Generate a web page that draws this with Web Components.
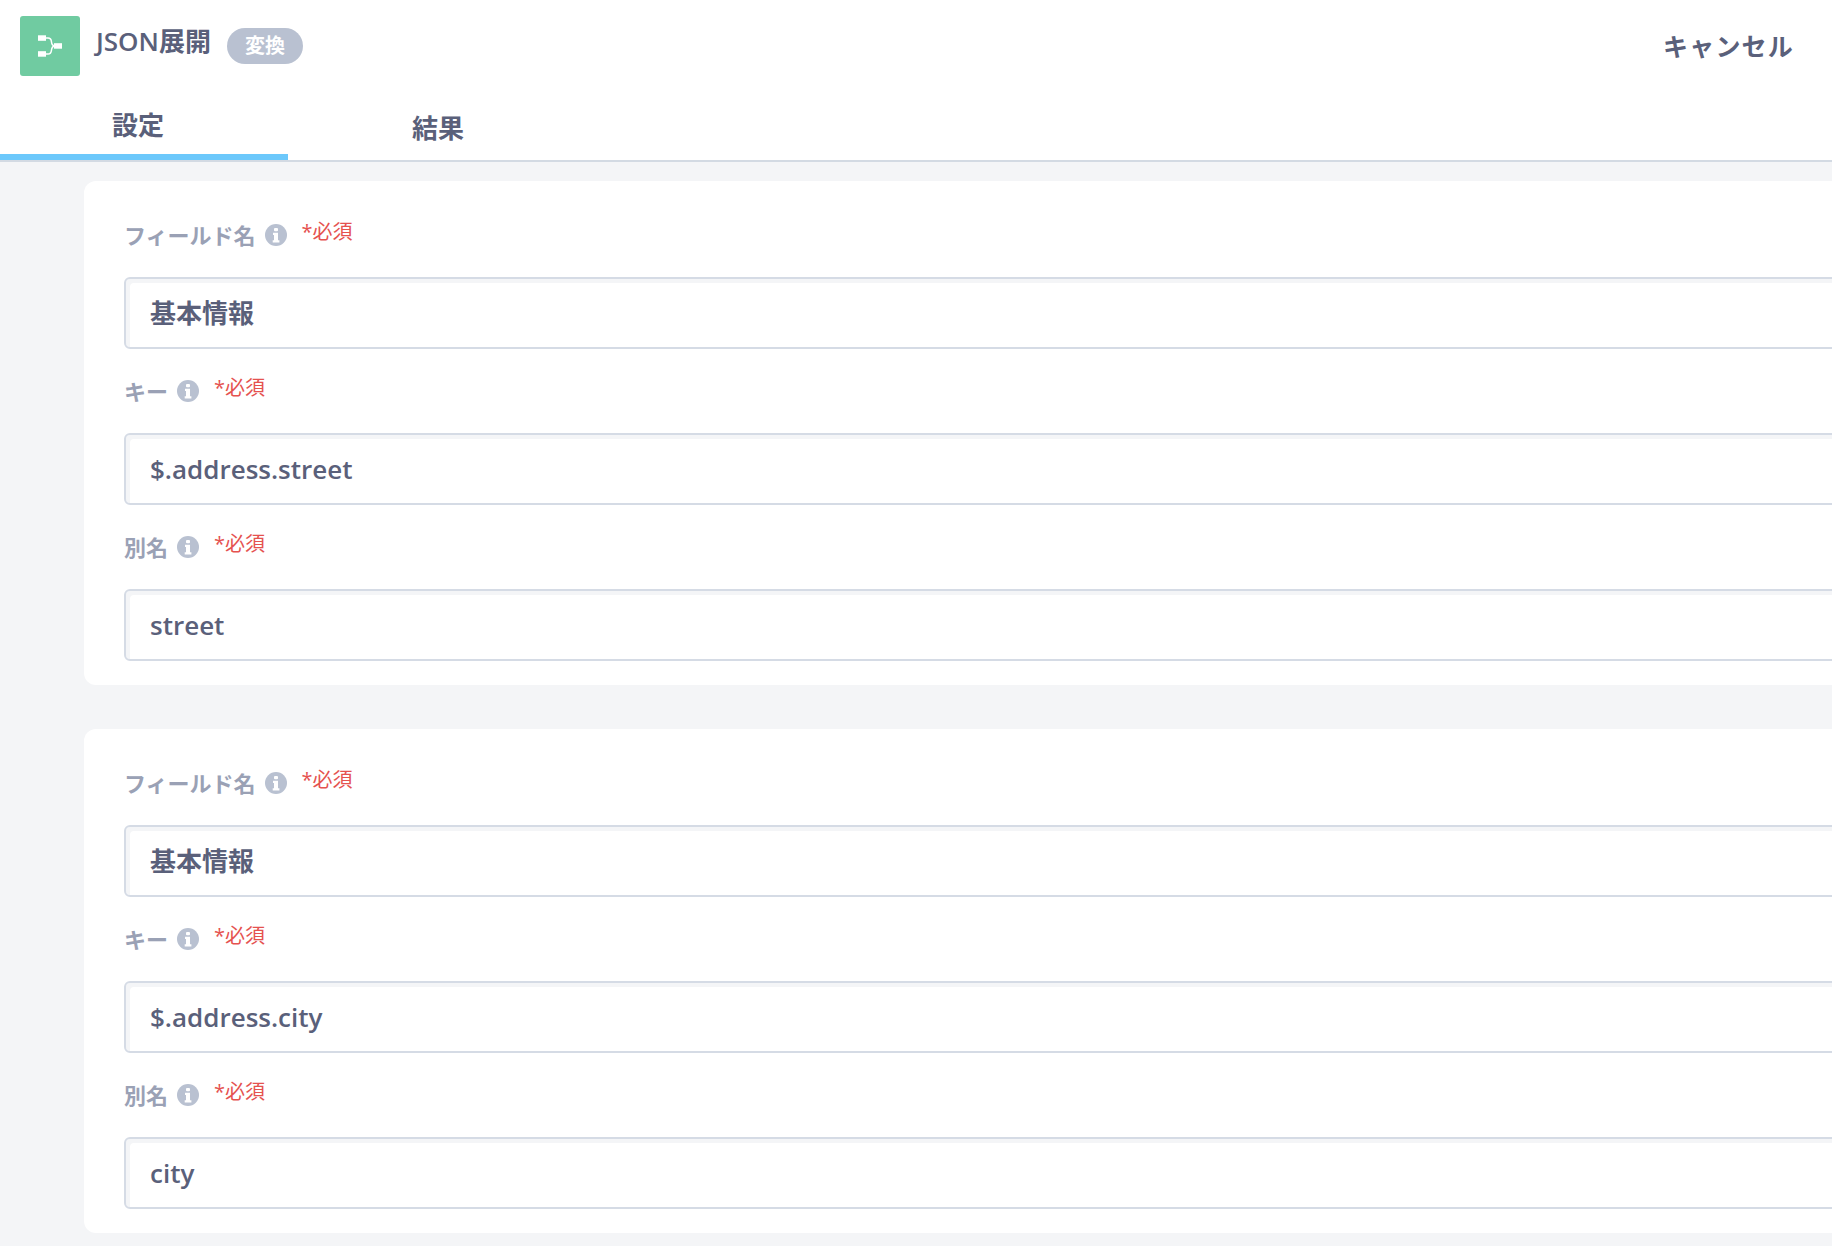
<!DOCTYPE html>
<html lang="ja">
<head>
<meta charset="utf-8">
<title>JSON展開</title>
<style>
html, body { margin: 0; height: 100%; overflow: hidden; }
body { background: #f4f5f7; font-family: "Open Sans", "Noto Sans CJK JP", sans-serif; }
</style>
</head>
<body>
<step-panel>
  <field-card>
    <form-field label="フィールド名" value="基本情報"></form-field>
    <form-field label="キー" value="$.address.street"></form-field>
    <form-field label="別名" value="street"></form-field>
  </field-card>
  <field-card>
    <form-field label="フィールド名" value="基本情報"></form-field>
    <form-field label="キー" value="$.address.city"></form-field>
    <form-field label="別名" value="city"></form-field>
  </field-card>
</step-panel>

<script>
class StepPanel extends HTMLElement {
    constructor() {
        super()
        this.attachShadow({ mode: 'open' })
        this.shadowRoot.innerHTML = `
        <style>
        :host{ display:block; }
        header{
            display:flex;
            align-items:flex-start;
            height:94px;
            background:#fff;
            padding:16px 38px 0 20px;
            box-sizing:border-box;
            color:#5a607a;
        }
        .logo{
            width:60px;
            height:60px;
            border-radius:3px;
            background:#70cba1;
            display:flex;
            align-items:center;
            justify-content:center;
            flex:none;
        }
        .name{
            margin:9px 0 0 16px;
            font-size:26px;
            line-height:32px;
            font-weight:600;
        }
        .badge{
            margin:12px 0 0 16px;
            height:36px;
            padding:0 18px;
            border-radius:18px;
            background:#b9c1d1;
            color:#fff;
            font-size:20px;
            font-weight:700;
            line-height:36px;
            box-sizing:border-box;
        }
        .cancel{
            margin:14px 0 0 auto;
            font-size:25px;
            line-height:32px;
            font-weight:700;
            letter-spacing:1.2px;
        }
        nav{
            display:flex;
            height:68px;
            background:#fff;
            border-bottom:2px solid #d3dae3;
            box-sizing:border-box;
            color:#5a607a;
            font-size:26px;
            font-weight:700;
        }
        .tab{
            width:288px;
            box-sizing:border-box;
            text-align:center;
            padding-top:16px;
            line-height:32px;
            height:66px;
        }
        .tab.active{
            border-bottom:6px solid #6cc8fb;
            padding:15px 12px 0 0;
        }
        .tab + .tab{ width:300px; padding-top:18px; }
        main{
            display:flex;
            flex-direction:column;
            gap:44px;
            padding:19px 0 0 84px;
        }
        </style>
        <header>
            <div class="logo">
                <svg width="26" height="22" viewBox="0 0 26 22">
                    <path d="M8 3h3c2.600 0 3.200 1.500 3.400 3.500s.8 4.500 3.600 4.500h1M8 19h3c2.600 0 3.200-1.500 3.400-3.500s.8-4.500 3.600-4.500" fill="none" stroke="#fff" stroke-width="1.500"/>
                    <rect x="1" y="0.300" width="8" height="5.500" fill="#fff"/>
                    <rect x="1" y="16.200" width="8" height="5.500" fill="#fff"/>
                    <rect x="17" y="8.200" width="8" height="5.500" fill="#fff"/>
                </svg>
            </div>
            <div class="name">JSON展開</div>
            <div class="badge">変換</div>
            <div class="cancel">キャンセル</div>
        </header>
        <nav>
            <div class="tab active">設定</div>
            <div class="tab">結果</div>
        </nav>
        <main><slot></slot></main>
        `
    }
}
customElements.define("step-panel", StepPanel)

class FieldCard extends HTMLElement {
    constructor() {
        super()
        this.attachShadow({ mode: 'open' })
        this.shadowRoot.innerHTML = `
        <style>
        :host{
            display:block;
            width:1900px;
            height:504px;
            box-sizing:border-box;
            background:#fff;
            border-radius:12px;
            padding:30px 0 0 40px;
        }
        </style>
        <slot></slot>
        `
    }
}
customElements.define("field-card", FieldCard)

class FormField extends HTMLElement {
    constructor() {
        super()
        this.attachShadow({ mode: 'open' })
        this.shadowRoot.innerHTML = `
        <style>
        :host{ display:block; height:156px; }
        .row{
            display:flex;
            align-items:flex-start;
            height:66px;
            color:#9aa1b5;
            font-size:22px;
            font-weight:700;
        }
        .text{ line-height:28px; margin-top:10px; }
        svg{ margin:13px 0 0 9px; flex:none; }
        .req{
            color:#e5524f;
            font-weight:400;
            font-size:20px;
            line-height:28px;
            margin:7px 0 0 15px;
        }
        .box{
            height:72px;
            box-sizing:border-box;
            border:2px solid #d5dbe5;
            border-radius:6px;
            box-shadow:inset 4px 4px 0 #f4f5f7;
            padding-left:24px;
            color:#5a607a;
            font-size:26px;
            font-weight:600;
            line-height:68px;
        }
        </style>
        <div class="row">
            <span class="text"></span>
            <svg width="22" height="22" viewBox="0 0 22 22">
                <circle cx="11" cy="11" r="11" fill="#b9c1d1"/>
                <rect x="9" y="4" width="4" height="3.200" rx="1" fill="#fff"/>
                <path d="M8 8.800h5v7.400h1.400v2.300H7.700v-2.300H9v-5.100H8z" fill="#fff"/>
            </svg>
            <span class="req">*必須</span>
        </div>
        <div class="box"></div>
        `
    }
    connectedCallback() {
        this.shadowRoot.querySelector('.text').textContent = this.getAttribute('label')
        this.shadowRoot.querySelector('.box').textContent = this.getAttribute('value')
    }
}
customElements.define("form-field", FormField)
</script>
</body>
</html>
